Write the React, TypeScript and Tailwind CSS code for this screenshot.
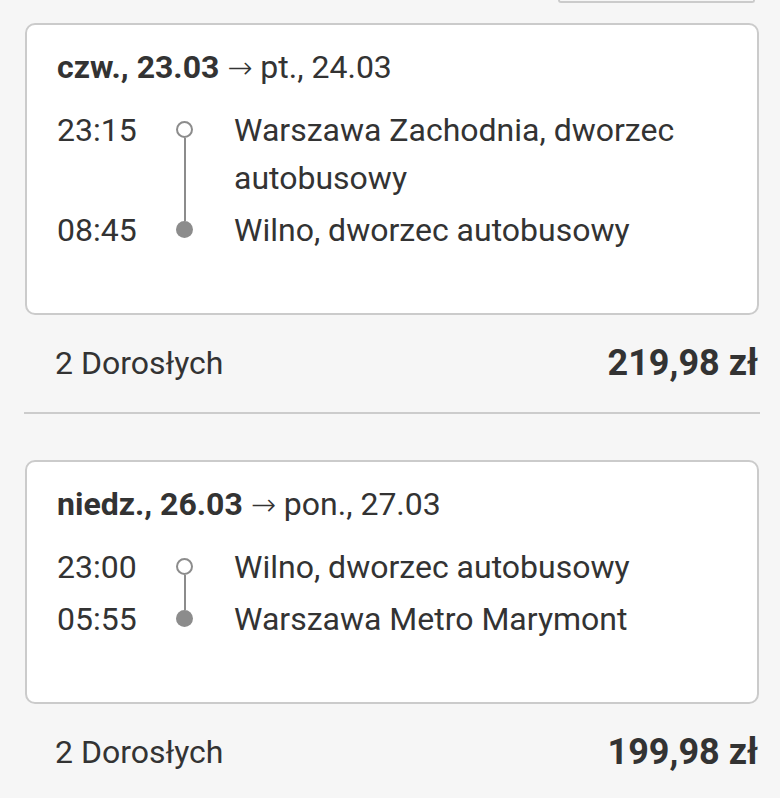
type Stop = {
  time: string;
  place: string;
};

type Trip = {
  from: string;
  to: string;
  stops: Stop[];
  passengers: string;
  price: string;
};

const trips: Trip[] = [
  {
    from: "czw., 23.03",
    to: "pt., 24.03",
    stops: [
      { time: "23:15", place: "Warszawa Zachodnia, dworzec autobusowy" },
      { time: "08:45", place: "Wilno, dworzec autobusowy" },
    ],
    passengers: "2 Dorosłych",
    price: "219,98 zł",
  },
  {
    from: "niedz., 26.03",
    to: "pon., 27.03",
    stops: [
      { time: "23:00", place: "Wilno, dworzec autobusowy" },
      { time: "05:55", place: "Warszawa Metro Marymont" },
    ],
    passengers: "2 Dorosłych",
    price: "199,98 zł",
  },
];

const StopRow = ({ stop, first }: { stop: Stop; first: boolean }) => (
  <div className={first ? "flex" : "flex pt-[4px]"}>
    <div className="w-[118px] shrink-0 leading-[48px]">{stop.time}</div>
    <div className="flex w-[19px] shrink-0 flex-col items-center">
      {first ? (
        <>
          <div className="h-[15px]" />
          <div className="h-[17px] w-[17px] rounded-full border-2 border-[#8c8c8c] bg-white" />
          <div className="w-[2px] flex-1 bg-[#8c8c8c]" />
        </>
      ) : (
        <>
          <div className="-mt-[4px] h-[19px] w-[2px] bg-[#8c8c8c]" />
          <div className="h-[17px] w-[17px] rounded-full bg-[#8c8c8c]" />
        </>
      )}
    </div>
    <div className="ml-[40px] flex-1 pr-6 leading-[48px]">{stop.place}</div>
  </div>
);

const TripCard = ({ trip }: { trip: Trip }) => (
  <div>
    <div className="mx-[1px] rounded-[10px] border-2 border-[#cbcbcb] bg-white pb-[59px] pl-[30px] pt-[18px]">
      <p className="leading-[48px]">
        <span className="font-bold">{trip.from}</span>{" "}
        <span className="font-['DejaVu_Sans',sans-serif] text-[30px] font-light">→</span>{" "}
        {trip.to}
      </p>
      <div className="mt-[14px]">
        {trip.stops.map((stop, i) => (
          <StopRow key={stop.time} stop={stop} first={i === 0} />
        ))}
      </div>
    </div>
    <div className="flex items-center justify-between pb-[25px] pl-[31px] pr-[2px] pt-[24px] leading-[48px]">
      <span>{trip.passengers}</span>
      <span className="text-[36px] font-bold">{trip.price}</span>
    </div>
  </div>
);

export default function App() {
  return (
    <div className="min-h-screen w-[780px] bg-[#f6f6f6] font-['Roboto',sans-serif] text-[32px] text-[#333333]">
      <div className="flex justify-end pr-[25px]">
        <div className="h-[3px] w-[197px] rounded-b-[10px] border-x-2 border-b-2 border-[#cbcbcb]" />
      </div>
      <div className="pl-[24px] pr-[20px] pt-[20px]">
        <TripCard trip={trips[0]} />
        <div className="mb-[46px] h-[2px] bg-[#cccccc]" />
        <TripCard trip={trips[1]} />
      </div>
    </div>
  );
}
